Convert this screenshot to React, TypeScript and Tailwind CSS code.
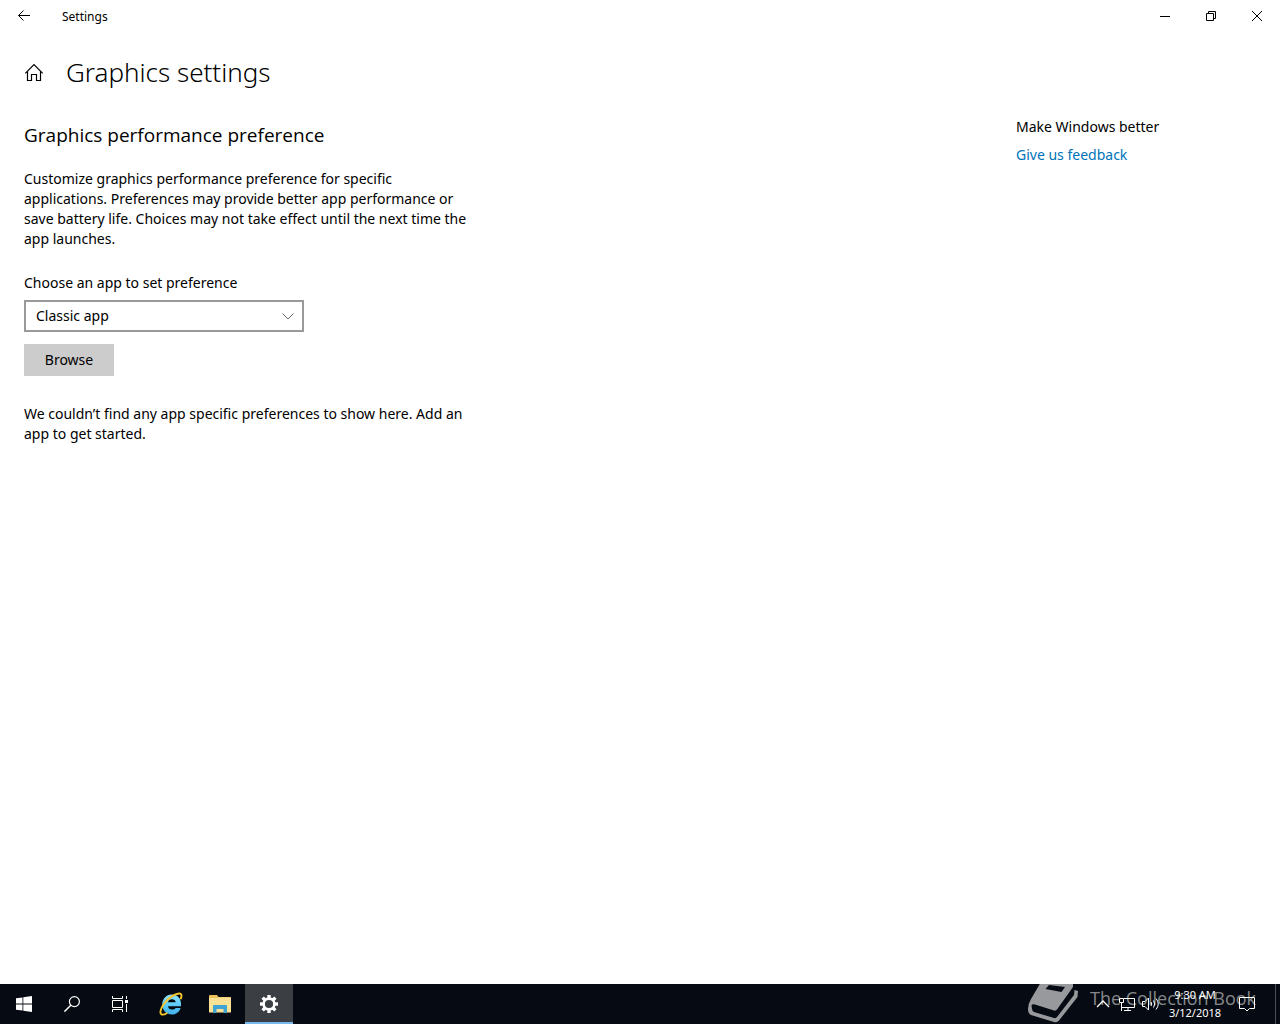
import * as React from "react"
import { clsx } from "clsx"

interface IconProps {
  className?: string
}

function BackIcon({ className }: IconProps) {
  return (
    <svg aria-hidden="true" viewBox="0 0 16 16" fill="none" stroke="currentColor" className={className}>
      <path d="M14 7.5 H2.5 M7.5 2.5 L2.5 7.5 L7.5 12.5" />
    </svg>
  )
}

function HomeIcon({ className }: IconProps) {
  return (
    <svg
      aria-hidden="true"
      viewBox="0 0 20 20"
      fill="none"
      stroke="currentColor"
      strokeWidth="1.2"
      className={className}
    >
      <path d="M1.3 11.3 L10 2.6 L18.7 11.3" />
      <path d="M3.5 9.5 V18.5 H7.5 V12.5 H12.5 V18.5 H16.5 V9.5" />
    </svg>
  )
}

function MinimizeIcon() {
  return (
    <svg aria-hidden="true" viewBox="0 0 10 10" stroke="currentColor" className="size-2.5">
      <path d="M0 5.5 H10" />
    </svg>
  )
}

function RestoreIcon() {
  return (
    <svg aria-hidden="true" viewBox="0 0 10 10" fill="none" stroke="currentColor" className="size-2.5">
      <path d="M0.5 2.5 H7.5 V9.5 H0.5 Z M2.5 2.5 V0.5 H9.5 V7.5 H7.5" />
    </svg>
  )
}

function CloseIcon() {
  return (
    <svg aria-hidden="true" viewBox="0 0 10 10" stroke="currentColor" className="size-2.5">
      <path d="M0 0 L10 10 M10 0 L0 10" />
    </svg>
  )
}

function StartIcon() {
  return (
    <svg aria-hidden="true" viewBox="0 0 16 16" fill="currentColor" className="size-4">
      <path d="M0 2.3 L6.5 1.4 V7.5 H0 Z M7.3 1.3 L16 0 V7.5 H7.3 Z M0 8.4 H6.5 V14.6 L0 13.7 Z M7.3 8.4 H16 V16 L7.3 14.7 Z" />
    </svg>
  )
}

function SearchIcon() {
  return (
    <svg
      aria-hidden="true"
      viewBox="0 0 16 16"
      fill="none"
      stroke="currentColor"
      strokeWidth="1.2"
      className="size-4"
    >
      <circle cx="10.4" cy="5.6" r="5" />
      <path d="M6.8 9.2 L0.4 15.6" strokeWidth="1.5" />
    </svg>
  )
}

function TaskViewIcon() {
  return (
    <svg aria-hidden="true" viewBox="0 0 16 16" fill="none" stroke="currentColor" className="size-4">
      <path d="M0.5 0 V2.5 H10.5 V0 M0.5 4.5 H10.5 V11.5 H0.5 Z M0.5 16 V13.5 H10.5 V16" />
      <path d="M14.5 0 V3 M14.5 8 V16" />
      <rect x="13" y="4" width="3" height="3" fill="currentColor" stroke="none" />
    </svg>
  )
}

function ExplorerBrowserIcon() {
  return (
    <svg aria-hidden="true" viewBox="0 0 24 24" className="size-6">
      <defs>
        <linearGradient id="ie-blue" x1="0" y1="0" x2="0" y2="1">
          <stop offset="0" stopColor="#8fe3ff" />
          <stop offset="0.5" stopColor="#5fcdf7" />
          <stop offset="1" stopColor="#3fb0ea" />
        </linearGradient>
      </defs>
      <path
        fill="url(#ie-blue)"
        fillRule="evenodd"
        d="M12.7 2.5 C18.5 2.5 22 6.5 22 12 V14.2 H9 C9.2 16.2 10.6 17.5 13 17.5 C14.9 17.5 16 17 16.6 15.9 H21.6 C20.3 20 17 22.5 12.8 22.5 C7 22.5 3.2 18 3.2 12.6 C3.2 7 7.2 2.5 12.7 2.5 Z M9 10.3 H16.7 C16.5 8.4 15.2 7.3 12.9 7.3 C10.7 7.3 9.3 8.4 9 10.3 Z"
      />
      <path
        fill="none"
        stroke="#f7c52b"
        strokeWidth="1.9"
        strokeLinecap="round"
        d="M21.8 6.5 C23 3.8 22.7 1.7 20.6 1.5 C16.8 1.2 9.5 5.5 5 11.8 C1.6 16.6 0.3 21.4 2.7 22.5 C4 23 5.9 22.3 7.7 21.2"
      />
    </svg>
  )
}

function FolderIcon() {
  return (
    <svg aria-hidden="true" viewBox="0 0 22 18" className="h-[18px] w-[22px]">
      <path fill="#edc25c" d="M0 1 Q0 0 1 0 H8 L9.5 2 H21 Q22 2 22 3 V8 H0 Z" />
      <path fill="#fbe196" d="M0 3 H8 L9.5 2.5 H22 V17 Q22 17.5 21.5 17.5 H0.5 Q0 17.5 0 17 Z" />
      <path fill="#3fa3d5" d="M4 11 Q4 10 5 10 H17 Q18 10 18 11 V18 H14.5 V14 H7.5 V18 H4 Z" />
    </svg>
  )
}

const GEAR_TEETH = [0, 45, 90, 135, 180, 225, 270, 315]

function GearIcon() {
  return (
    <svg aria-hidden="true" viewBox="-9 -9 18 18" className="size-[18px]">
      <circle r="5.4" fill="none" stroke="currentColor" strokeWidth="2.6" />
      {GEAR_TEETH.map((angle) => (
        <rect
          key={angle}
          x="-1.7"
          y="-9"
          width="3.4"
          height="3.4"
          fill="currentColor"
          transform={`rotate(${angle})`}
        />
      ))}
    </svg>
  )
}

function BookIcon() {
  return (
    <svg aria-hidden="true" viewBox="0 0 52 42" className="h-[42px] w-13">
      <path
        fill="currentColor"
        fillRule="evenodd"
        d="M13 0 H45 V5 L29 27.5 Q28 29 26 28.5 L7 22.5 Q4 21.5 3.5 23.5 L4 27 Q4 29 6 30 L26 36 Q28 36.5 29 35 L46 13 L46.5 8 L50 9 L49.5 15 L31 38.5 Q29 41 26 40 L3 33 Q0 31.5 0 27 Q0 22 3 17 Z M21 3 L17.5 7 L33.5 10 L37 5 Z"
      />
    </svg>
  )
}

function TrayChevronIcon() {
  return (
    <svg
      aria-hidden="true"
      viewBox="0 0 14 8"
      fill="none"
      stroke="currentColor"
      strokeWidth="1.3"
      className="h-2 w-3.5"
    >
      <path d="M1 7 L7 1 L13 7" />
    </svg>
  )
}

function NetworkIcon() {
  return (
    <svg aria-hidden="true" viewBox="0 0 16 14" fill="none" stroke="currentColor" className="h-3.5 w-4">
      <path d="M5 1.5 H15.5 V10.5 H2.5 M9 10.5 V13 M5 13.5 H12" />
      <path d="M0.5 1.5 H4.5 V5.5 H0.5 Z M2.5 6 V14" />
    </svg>
  )
}

function VolumeIcon() {
  return (
    <svg aria-hidden="true" viewBox="0 0 18 14" fill="none" stroke="currentColor" className="h-3.5 w-[18px]">
      <path d="M0.5 4.5 H3 L6.5 1 V13 L3 9.5 H0.5 Z" />
      <path d="M9 5 Q10.5 7 9 9 M11.5 3.5 Q14 7 11.5 10.5 M14 1.5 Q18.5 7 14 12.5" />
    </svg>
  )
}

function NotificationIcon() {
  return (
    <svg aria-hidden="true" viewBox="0 0 16 16" fill="none" stroke="currentColor" className="size-4">
      <path d="M0.5 1.5 H15.5 V12.5 H10.5 L8 15 L5.5 12.5 H0.5 Z" />
    </svg>
  )
}

interface CaptionButtonProps {
  label: string
  children: React.ReactNode
}

function CaptionButton({ label, children }: CaptionButtonProps) {
  return (
    <button
      type="button"
      aria-label={label}
      className="flex h-8 w-[46px] items-center justify-center hover:bg-gray-200"
    >
      {children}
    </button>
  )
}

interface TaskbarButtonProps {
  label: string
  active?: boolean
  children: React.ReactNode
}

function TaskbarButton({ label, active = false, children }: TaskbarButtonProps) {
  return (
    <button
      type="button"
      aria-label={label}
      className={clsx(
        "flex h-10 w-12 items-center justify-center",
        active ? "border-y-2 border-t-transparent border-b-[#76b9ed] bg-[#3b3e43]" : "hover:bg-white/10",
      )}
    >
      {children}
    </button>
  )
}

function TitleBar() {
  return (
    <header className="flex h-8 items-center justify-between">
      <div className="flex items-center">
        <button type="button" aria-label="Back" className="flex h-8 w-12 items-center justify-center">
          <BackIcon className="size-4" />
        </button>
        <span className="pt-0.5 pl-3.5 text-[12px] leading-4">Settings</span>
      </div>
      <div className="flex">
        <CaptionButton label="Minimize">
          <MinimizeIcon />
        </CaptionButton>
        <CaptionButton label="Restore">
          <RestoreIcon />
        </CaptionButton>
        <CaptionButton label="Close">
          <CloseIcon />
        </CaptionButton>
      </div>
    </header>
  )
}

function PreferencePanel() {
  const [kind, setKind] = React.useState("classic")

  return (
    <section className="w-[450px]">
      <h2 className="font-['Open_Sans','Noto_Sans',sans-serif] text-[19px] leading-6">
        Graphics performance preference
      </h2>
      <p className="mt-[22px]">
        Customize graphics performance preference for specific applications. Preferences may provide
        better app performance or save battery life. Choices may not take effect until the next time
        the app launches.
      </p>
      <label htmlFor="app-kind" className="mt-6 block">
        Choose an app to set preference
      </label>
      <div className="mt-[7px] grid w-[280px] items-center">
        <select
          id="app-kind"
          value={kind}
          onChange={(e) => setKind(e.target.value)}
          className="col-start-1 row-start-1 h-8 appearance-none border-2 border-[#999999] bg-white px-2.5"
        >
          <option value="classic">Classic app</option>
          <option value="universal">Universal app</option>
        </select>
        <svg
          aria-hidden="true"
          viewBox="0 0 12 7"
          fill="none"
          stroke="#666666"
          className="pointer-events-none col-start-1 row-start-1 mr-2.5 h-[7px] w-3 justify-self-end"
        >
          <path d="M0.5 0.5 L6 6 L11.5 0.5" />
        </svg>
      </div>
      <button type="button" className="mt-3 h-8 w-[90px] bg-[#cccccc] hover:bg-[#bbbbbb]">
        Browse
      </button>
      <p className="mt-7">
        We couldn’t find any app specific preferences to show here. Add an app to get started.
      </p>
    </section>
  )
}

function Taskbar() {
  return (
    <footer className="relative flex h-10 justify-between overflow-hidden bg-[#060a12] text-white">
      <div
        aria-hidden="true"
        className="absolute right-6 bottom-0 flex items-start gap-2.5 text-[#97999c]"
      >
        <BookIcon />
        <span className="pt-1 font-['Open_Sans','Noto_Sans',sans-serif] text-[18px] leading-6 text-[#85878a]">
          The Collection Book
        </span>
      </div>
      <nav aria-label="Taskbar" className="flex gap-px">
        <div className="flex pr-0.5">
          <TaskbarButton label="Start">
            <StartIcon />
          </TaskbarButton>
          <TaskbarButton label="Search">
            <SearchIcon />
          </TaskbarButton>
          <TaskbarButton label="Task view">
            <TaskViewIcon />
          </TaskbarButton>
        </div>
        <TaskbarButton label="Internet Explorer">
          <ExplorerBrowserIcon />
        </TaskbarButton>
        <TaskbarButton label="File Explorer">
          <FolderIcon />
        </TaskbarButton>
        <TaskbarButton label="Settings" active>
          <GearIcon />
        </TaskbarButton>
      </nav>
      <div className="relative flex">
        <button type="button" aria-label="Show hidden icons" className="flex w-6 items-center justify-center">
          <TrayChevronIcon />
        </button>
        <button type="button" aria-label="Network" className="flex w-6 items-center justify-center">
          <NetworkIcon />
        </button>
        <button type="button" aria-label="Volume" className="flex w-6 items-center justify-center">
          <VolumeIcon />
        </button>
        <button
          type="button"
          className="ml-1 flex w-14 flex-col items-center justify-center text-[11px] leading-[18px]"
        >
          <span>9:30 AM</span>
          <span>3/12/2018</span>
        </button>
        <button type="button" aria-label="Notifications" className="flex w-12 items-center justify-center">
          <NotificationIcon />
        </button>
        <button type="button" aria-label="Show desktop" className="ml-1 w-[5px] border-l border-[#4a4d52]" />
      </div>
    </footer>
  )
}

export default function App() {
  return (
    <div className="flex min-h-screen flex-col bg-white font-['Noto_Sans','Open_Sans',sans-serif] text-[14px] leading-5 text-black">
      <TitleBar />
      <main className="flex-1 px-6">
        <div className="flex items-center gap-[22px] pt-5">
          <a href="#home" aria-label="Home">
            <HomeIcon className="size-5" />
          </a>
          <h1 className="text-[26px] leading-10 font-light">Graphics settings</h1>
        </div>
        <div className="flex justify-between pt-[31px]">
          <PreferencePanel />
          <aside className="flex w-60 flex-col items-start gap-2">
            <h3 className="-mt-1.5">Make Windows better</h3>
            <a href="#feedback" className="text-[#0073b8] hover:text-gray-500">
              Give us feedback
            </a>
          </aside>
        </div>
      </main>
      <Taskbar />
    </div>
  )
}
